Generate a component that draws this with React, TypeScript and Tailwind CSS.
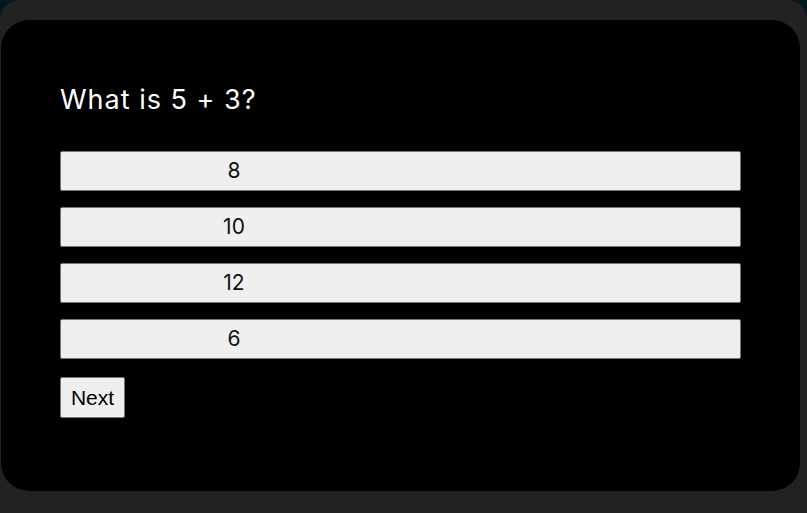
const answers = ["8", "10", "12", "6"];

export default function App() {
  return (
    <div className="h-[513px] w-[807px] overflow-hidden bg-[#04191d]">
      <div className="h-full w-full rounded-t-[20px] bg-[#222222] pt-5 pl-px">
        <div
          className="h-[471px] w-[799px] rounded-[28px] bg-black px-[59px] pt-[62px]"
          style={{ fontFamily: "Inter, 'Noto Sans', sans-serif" }}
        >
          <h1 className="text-[27px] leading-[36px] tracking-[1px] text-white">What is 5 + 3?</h1>

          <div className="mt-[33px] flex flex-col gap-4">
            {answers.map((a) => (
              <button
                key={a}
                className="flex h-10 w-[681px] items-center rounded-[2px] border border-[#767676] bg-[#efefef] text-[21px] text-[#111]"
              >
                <span className="w-[346px] text-center">{a}</span>
              </button>
            ))}
          </div>

          <button
            className="mt-[18px] h-[41px] w-[65px] rounded-[2px] border border-[#767676] bg-[#efefef] text-[21px] text-black"
            style={{ fontFamily: "'Liberation Sans', Arial, sans-serif" }}
          >
            Next
          </button>
        </div>
      </div>
    </div>
  );
}
